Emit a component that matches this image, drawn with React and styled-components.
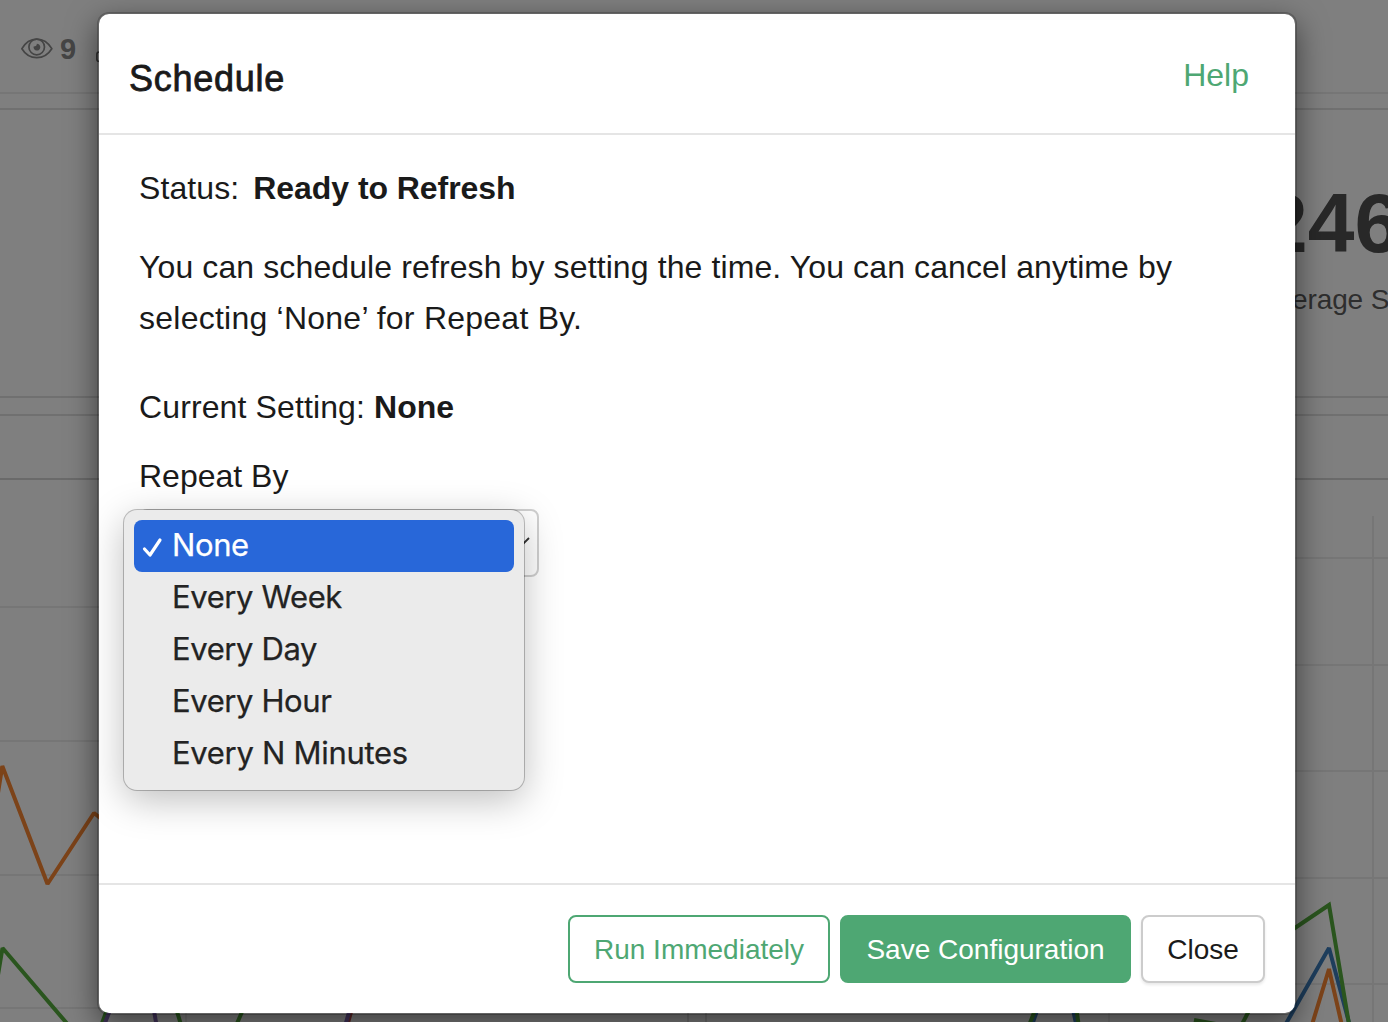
import React from "react";
import styled, { createGlobalStyle } from "styled-components";

const GlobalStyle = createGlobalStyle`
  * { box-sizing: border-box; }
  body {
    margin: 0;
    overflow: hidden;
    background: #fff;
    color: #1a1a1a;
    font-family: "Liberation Sans", Arial, sans-serif;
  }
`;

const Screen = styled.div`
  position: relative;
  width: 1388px;
  height: 1022px;
  overflow: hidden;
`;

/* ---------- dashboard behind the dialog ---------- */

const Dashboard = styled.div`
  display: flex;
  flex-direction: column;
  height: 100%;
`;

const TopBar = styled.div`
  display: flex;
  align-items: center;
  height: 94px;
  padding: 6px 0 0 21px;
  border-bottom: 2px solid #ececec;
`;

const ViewCount = styled.span`
  margin: 0 18px 0 7px;
  width: 17px;
  font-size: 29px;
  font-weight: 700;
  color: #8a8a8a;
`;

const MetricCard = styled.div`
  height: 290px;
  margin-top: 14px;
  padding: 66px 0 0 1260px;
  border: solid #e0e0e0;
  border-width: 2px 0;
  color: #505050;
  white-space: nowrap;
  overflow: hidden;
`;

const MetricValue = styled.div`
  padding-left: 1px;
  font-size: 84px;
  font-weight: 700;
  line-height: 94px;
`;

const MetricLabel = styled.div`
  margin-top: 13px;
  font-size: 28px;
  line-height: 34px;
  letter-spacing: -0.1px;
  color: #5c5c5c;
`;

const ChartRow = styled.div`
  display: flex;
  gap: 16px;
  flex: 1;
  margin-top: 16px;
`;

const ChartCard = styled.div`
  flex: ${(p) => (p.$fill ? "1" : "0 0 689px")};
  border-top: 2px solid #e0e0e0;
  border-left: ${(p) => (p.$fill ? "2px solid #e0e0e0" : "0")};
  border-right: ${(p) => (p.$fill ? "0" : "2px solid #e0e0e0")};
`;

const ChartTitle = styled.div`
  height: 64px;
  border-bottom: 2px solid #d4d4d4;
`;

const Plot = styled.svg`
  display: block;
`;

const Backdrop = styled.div`
  position: absolute;
  inset: 0;
  display: flex;
  align-items: flex-start;
  justify-content: center;
  padding: 12px 0 0 6px;
  background: rgba(0, 0, 0, 0.5);
`;

/* ---------- dialog ---------- */

const Dialog = styled.div`
  display: flex;
  flex-direction: column;
  width: 1200px;
  height: 1003px;
  border: 2px solid rgba(0, 0, 0, 0.2);
  border-radius: 12px;
  background: #fff;
  background-clip: padding-box;
  box-shadow: 0 10px 30px rgba(0, 0, 0, 0.5);
`;

const DialogHeader = styled.div`
  display: flex;
  justify-content: space-between;
  height: 121px;
  padding: 40px 46px 0 30px;
  border-bottom: 2px solid #e5e5e5;
`;

const DialogTitle = styled.h4`
  margin: 5px 0 0;
  font-size: 36px;
  font-weight: 400;
  line-height: 40px;
  letter-spacing: 0.75px;
  -webkit-text-stroke: 0.8px #1a1a1a;
`;

const HelpLink = styled.a`
  font-size: 32px;
  line-height: 42px;
  color: #4ea773;
`;

const DialogBody = styled.div`
  display: flex;
  flex-direction: column;
  flex: 1;
  padding: 28px 40px 0;
  font-size: 32px;
  line-height: 51px;
`;

const Line = styled.div`
  margin-bottom: ${(p) => p.$gap}px;
  letter-spacing: ${(p) => p.$track || 0}px;
  white-space: nowrap;
`;

const Strong = styled.strong`
  margin-left: ${(p) => p.$space || 0}px;
  letter-spacing: ${(p) => p.$track || 0}px;
`;

const SelectWrap = styled.div`
  position: relative;
  width: 400px;
`;

const SelectBox = styled.div`
  display: flex;
  align-items: center;
  justify-content: flex-end;
  height: 68px;
  padding: 0 6px 2px 0;
  border: 2px solid #d0d0d0;
  border-radius: 8px;
  background: #fff;
`;

const Menu = styled.ul`
  position: absolute;
  top: 1px;
  left: -15px;
  width: 400px;
  height: 280px;
  margin: 0;
  padding: 10px;
  list-style: none;
  border-radius: 13px;
  background: #ebebeb;
  box-shadow: 0 0 0 1px rgba(0, 0, 0, 0.24), 0 10px 38px rgba(0, 0, 0, 0.26);
`;

const MenuItem = styled.li`
  display: flex;
  align-items: center;
  height: 52px;
  padding-bottom: 2px;
  border-radius: 8px;
  font-family: Inter, sans-serif;
  font-size: 31px;
  line-height: 50px;
  letter-spacing: ${(p) => p.$track}px;
  -webkit-text-stroke: 0.25px currentColor;
  color: ${(p) => (p.$active ? "#fff" : "#232323")};
  background: ${(p) => (p.$active ? "#2867d9" : "transparent")};
`;

const CheckSlot = styled.span`
  display: flex;
  width: 38px;
  padding: 4px 0 0 8px;
`;

const DialogFooter = styled.div`
  display: flex;
  justify-content: flex-end;
  gap: 10px;
  height: 130px;
  padding: 30px 30px 0;
  border-top: 2px solid #e5e5e5;
`;

const tones = {
  outline: "color:#4ea773;background:#fff;border-color:#4ea773;",
  solid: "color:#fff;background:#4ea773;border-color:#4ea773;",
  plain:
    "color:#1a1a1a;background:#fff;border-color:#ccc;box-shadow:0 2px 3px rgba(0,0,0,.09);",
};

const Button = styled.button`
  width: ${(p) => p.$width}px;
  height: 68px;
  padding: 2px 0 0;
  border: 2px solid;
  border-radius: 8px;
  font-family: inherit;
  font-size: 28px;
  line-height: 62px;
  white-space: nowrap;
  ${(p) => tones[p.$tone]}
`;

const EyeIcon = () => (
  <svg width="32" height="24" viewBox="0 0 32 24" fill="none" stroke="#8a8a8a" strokeWidth="1.7">
    <path d="M.9 11.7C8-1.2 23.5-1.2 30.8 11.7 23.5 23.6 8 23.6.9 11.7Z" />
    <circle cx="15.7" cy="10" r="7.8" />
    <path d="M15.8 6.8c0 1.8-.8 2.7-3.2 2.8a3.4 3.4 0 1 0 3.2-2.8Z" fill="#8a8a8a" stroke="none" />
  </svg>
);

const PartialIcon = () => (
  <svg width="14" height="12" viewBox="0 0 14 12" fill="none" stroke="#6a6a6a" strokeWidth="1.6">
    <rect x=".8" y="1" width="12" height="9.5" rx="2.5" />
  </svg>
);

const TopIconSlot = styled.span`
  display: flex;
  margin: 16px 0 0 1px;
`;

const options = [
  { label: "None", active: true, track: -0.4 },
  { label: "Every Week", track: -0.4 },
  { label: "Every Day", track: -0.4 },
  { label: "Every Hour", track: -0.4 },
  { label: "Every N Minutes", track: -0.3 },
];

const Series = ({ color, points, join = "bevel" }) => (
  <polyline points={points} fill="none" stroke={color} strokeWidth="4" strokeLinejoin={join} />
);

const green = "#54ab3c";
const orange = "#f98632";
const blue = "#3c7cba";
const purple = "#8468b8";

export default function App() {
  return (
    <Screen>
      <GlobalStyle />
      <Dashboard>
        <TopBar>
          <EyeIcon />
          <ViewCount>9</ViewCount>
          <TopIconSlot>
            <PartialIcon />
          </TopIconSlot>
        </TopBar>
        <MetricCard>
          <MetricValue>246</MetricValue>
          <MetricLabel>Average S</MetricLabel>
        </MetricCard>
        <ChartRow>
          <ChartCard>
            <ChartTitle />
            <Plot width="687" height="542" viewBox="0 480 687 542">
              <path
                d="M0 607H687M0 741H687M0 875H687M0 1008H687M186 516V1022"
                stroke="#ececec"
                strokeWidth="2"
              />
              <Series color={orange} points="-2,793 2.3,766 47.5,884 94,813 140,850" />
              <Series color={green} points="-2,975 2.5,948 70,1027" />
              <Series color={green} points="101,1026 108,1007" />
              <Series color={purple} points="103,1028 112,1005" />
              <Series color={purple} points="153,1005 157,1028" />
              <Series color={green} points="175,1005 182,1028" />
              <Series color={green} points="235,1028 245,1005" />
              <Series color="#c0504d" points="346.5,1028 353,1005" />
              <Series color={purple} points="344.5,1028 351,1005" />
            </Plot>
          </ChartCard>
          <ChartCard $fill>
            <ChartTitle />
            <Plot width="681" height="542" viewBox="707 480 681 542">
              <path
                d="M707 558H1388M707 665H1388M707 771H1388M707 878H1388M707 984H1388M1109 516V1022M1373 516V1022"
                stroke="#ececec"
                strokeWidth="2"
              />
              <Series color={blue} points="1031,1028 1039,1005" />
              <Series color={blue} points="1072,1005 1077,1028" />
              <Series color={blue} points="1283.5,1028 1329,948 1351,1030" />
              <Series color={green} points="1028,1028 1037,1005" />
              <Series color={green} points="1076,1005 1079,1028" />
              <Series color={green} points="1194,1020 1216,1024" />
              <Series color={green} points="1240,1028 1252,1005" />
              <Series color={green} join="miter" points="1280,938 1329,905 1350,1030" />
              <Series color={orange} points="1311,1028 1329,969 1343,1030" />
            </Plot>
          </ChartCard>
        </ChartRow>
      </Dashboard>

      <Backdrop>
        <Dialog role="dialog">
          <DialogHeader>
            <DialogTitle>Schedule</DialogTitle>
            <HelpLink>Help</HelpLink>
          </DialogHeader>
          <DialogBody>
            <Line $gap={28} $track={0.1}>
              Status: <Strong $space={5} $track={-0.06}>Ready to Refresh</Strong>
            </Line>
            <Line $gap={0} $track={0.11}>
              You can schedule refresh by setting the time. You can cancel anytime by
            </Line>
            <Line $gap={38} $track={0.24}>selecting ‘None’ for Repeat By.</Line>
            <Line $gap={18} $track={0.12}>
              Current Setting: <Strong>None</Strong>
            </Line>
            <Line $gap={7}>Repeat By</Line>
            <SelectWrap>
              <SelectBox>
                <svg width="18" height="12" viewBox="0 0 18 12" fill="none" stroke="#333" strokeWidth="1.8">
                  <path d="M2 2l7 7 7-7" />
                </svg>
              </SelectBox>
              <Menu>
                {options.map((o) => (
                  <MenuItem key={o.label} $active={o.active} $track={o.track}>
                    <CheckSlot>
                      {o.active && (
                        <svg width="21" height="21" viewBox="0 0 21 21" fill="none" stroke="#fff" strokeWidth="3.2" strokeLinecap="round" strokeLinejoin="round">
                          <path d="M2.5 12l5.5 6L18 3" />
                        </svg>
                      )}
                    </CheckSlot>
                    {o.label}
                  </MenuItem>
                ))}
              </Menu>
            </SelectWrap>
          </DialogBody>
          <DialogFooter>
            <Button $tone="outline" $width={262}>Run Immediately</Button>
            <Button $tone="solid" $width={291}>Save Configuration</Button>
            <Button $tone="plain" $width={124}>Close</Button>
          </DialogFooter>
        </Dialog>
      </Backdrop>
    </Screen>
  );
}
